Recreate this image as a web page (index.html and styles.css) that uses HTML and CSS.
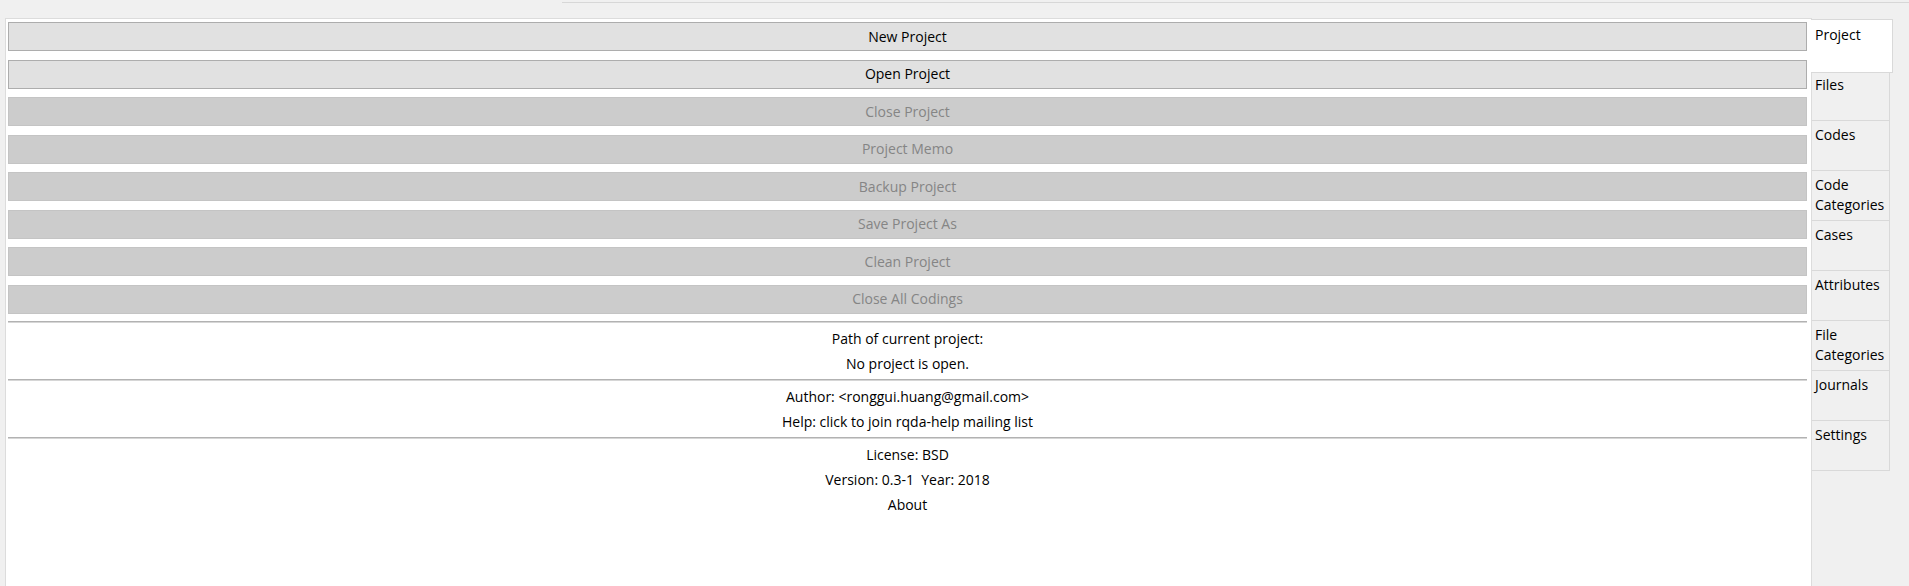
FILE: index.html
```html
<!DOCTYPE html>
<html lang="en">
<head>
<meta charset="utf-8">
<title>RQDA</title>
<link rel="stylesheet" href="styles.css">
</head>
<body>
<div class="window">
  <div class="topbar">
    <div class="topbar-gap"></div>
    <div class="topbar-line"></div>
  </div>
  <div class="main">
    <div class="pane">
      <div class="buttons">
        <div class="btn">New Project</div>
        <div class="btn">Open Project</div>
        <div class="btn disabled">Close Project</div>
        <div class="btn disabled">Project Memo</div>
        <div class="btn disabled">Backup Project</div>
        <div class="btn disabled">Save Project As</div>
        <div class="btn disabled">Clean Project</div>
        <div class="btn disabled">Close All Codings</div>
      </div>
      <div class="sep"></div>
      <div class="info">
        <div class="line">Path of current project:</div>
        <div class="line">No project is open.</div>
      </div>
      <div class="sep"></div>
      <div class="info">
        <div class="line">Author: &lt;ronggui.huang@gmail.com&gt;</div>
        <div class="line">Help: click to join rqda-help mailing list</div>
      </div>
      <div class="sep"></div>
      <div class="info">
        <div class="line">License: BSD</div>
        <div class="line">Version: 0.3-1&nbsp; Year: 2018</div>
        <div class="line">About</div>
      </div>
    </div>
    <div class="tabs">
      <div class="tab selected">Project</div>
      <div class="tab">Files</div>
      <div class="tab">Codes</div>
      <div class="tab">Code<br>Categories</div>
      <div class="tab">Cases</div>
      <div class="tab">Attributes</div>
      <div class="tab">File<br>Categories</div>
      <div class="tab">Journals</div>
      <div class="tab">Settings</div>
    </div>
  </div>
</div>
</body>
</html>
```
FILE: styles.css
```css
html, body {
  margin: 0;
  padding: 0;
  background: #f0f0f0;
  overflow: hidden;
}

.window {
  width: 1909px;
  height: 586px;
  display: flex;
  flex-direction: column;
  font-family: "Open Sans", "Noto Sans", sans-serif;
  font-size: 14px;
  color: #000;
}

.topbar {
  height: 18px;
  display: flex;
  flex: none;
}

.topbar-gap {
  width: 562px;
}

.topbar-line {
  flex: 1;
  margin-top: 2px;
  height: 0;
  border-top: 1px solid #d7d7d7;
}

.main {
  flex: 1;
  display: flex;
  padding-left: 5px;
  min-height: 0;
}

.pane {
  box-sizing: border-box;
  width: 1807px;
  flex: none;
  background: #fff;
  border: 1px solid #dcdcdc;
  border-bottom: none;
  padding: 3px 4px 0 2px;
}

.buttons {
  display: flex;
  flex-direction: column;
  gap: 8.5px;
  margin-bottom: 7px;
}

.btn {
  box-sizing: border-box;
  height: 29px;
  background: #e1e1e1;
  border: 1px solid #adadad;
  display: flex;
  align-items: center;
  justify-content: center;
  line-height: 1;
}

.btn.disabled {
  background: #cccccc;
  border-color: #c4c4c4;
  color: #858585;
}

.sep {
  height: 0;
  border-top: 1px solid #b2b2b2;
  border-bottom: 1px solid #d6d6d6;
}

.info {
  padding: 3.5px 0 2.5px;
  text-align: center;
}

.line {
  height: 25px;
  line-height: 25px;
}

.tabs {
  flex: none;
  display: flex;
  flex-direction: column;
  padding-top: 1px;
}

.tab {
  box-sizing: border-box;
  width: 78px;
  height: 50px;
  padding: 4px 0 0 3px;
  line-height: 20px;
  background: #f0f0f0;
  border-right: 1px solid #d9d9d9;
  border-bottom: 1px solid #d9d9d9;
}

.tab.selected {
  position: relative;
  z-index: 1;
  width: 82px;
  height: 54px;
  margin-left: -1px;
  margin-bottom: -2px;
  padding: 5px 0 0 4px;
  background: #fff;
  border-top: 1px solid #d9d9d9;
}
```
